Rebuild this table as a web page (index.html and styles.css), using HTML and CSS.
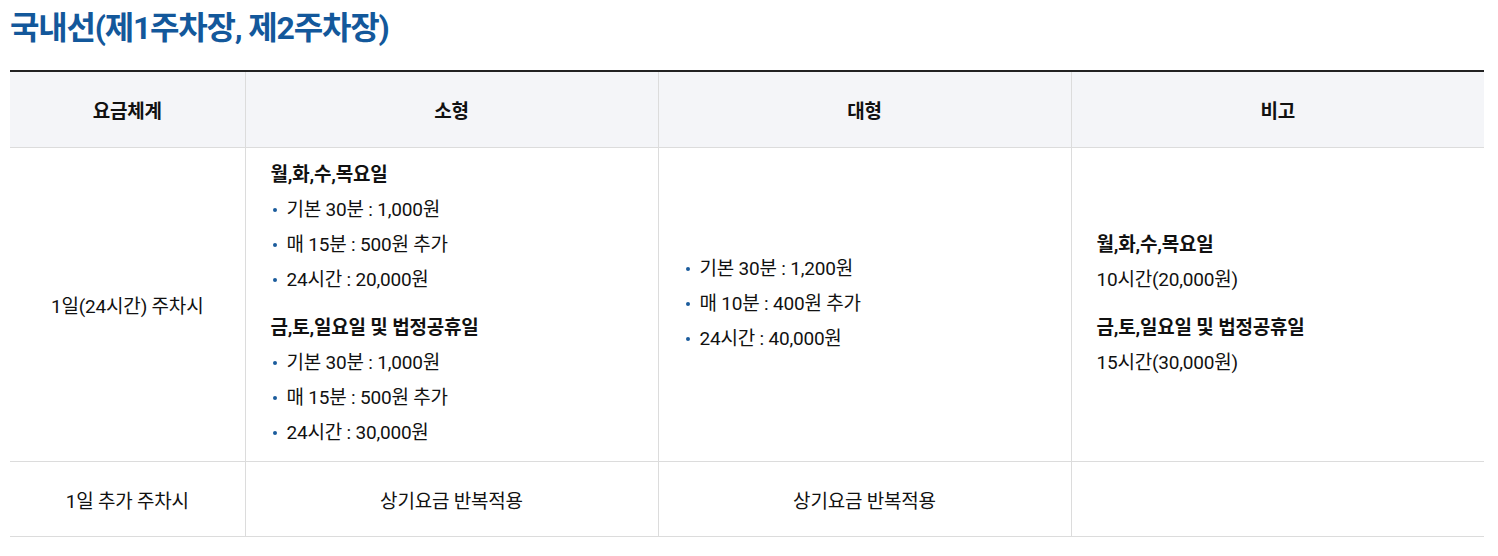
FILE: index.html
```html
<!DOCTYPE html>
<html lang="ko">
<head>
<meta charset="utf-8">
<title>국내선 주차요금</title>
<link rel="stylesheet" href="styles.css">
</head>
<body>
<h2 class="title">국내선(제1주차장, 제2주차장)</h2>
<table class="fee">
  <colgroup>
    <col class="c1"><col class="c2"><col class="c3"><col class="c4">
  </colgroup>
  <thead>
    <tr><th>요금체계</th><th>소형</th><th>대형</th><th>비고</th></tr>
  </thead>
  <tbody>
    <tr class="main">
      <td class="center">1일(24시간) 주차시</td>
      <td class="left">
        <p class="head">월,화,수,목요일</p>
        <ul>
          <li>기본 30분 : 1,000원</li>
          <li>매 15분 : 500원 추가</li>
          <li>24시간 : 20,000원</li>
        </ul>
        <p class="head gap">금,토,일요일 및 법정공휴일</p>
        <ul>
          <li>기본 30분 : 1,000원</li>
          <li>매 15분 : 500원 추가</li>
          <li>24시간 : 30,000원</li>
        </ul>
      </td>
      <td class="left">
        <ul>
          <li>기본 30분 : 1,200원</li>
          <li>매 10분 : 400원 추가</li>
          <li>24시간 : 40,000원</li>
        </ul>
      </td>
      <td class="left">
        <p class="head">월,화,수,목요일</p>
        <p class="line">10시간(20,000원)</p>
        <p class="head gap">금,토,일요일 및 법정공휴일</p>
        <p class="line">15시간(30,000원)</p>
      </td>
    </tr>
    <tr class="extra">
      <td class="center">1일 추가 주차시</td>
      <td class="center">상기요금 반복적용</td>
      <td class="center">상기요금 반복적용</td>
      <td class="center"></td>
    </tr>
  </tbody>
</table>
</body>
</html>
```

FILE: styles.css
```css
html, body {
  margin: 0;
  padding: 0;
  background: #fff;
}
body {
  padding: 0 10px;
  font-family: Roboto, "Noto Sans CJK KR", sans-serif;
  color: #111;
}
.title {
  margin: 0;
  padding-top: 8px;
  height: 62px;
  font-size: 32px;
  line-height: 40px;
  font-weight: 700;
  color: #13589b;
  letter-spacing: -1.2px;
}
.fee {
  width: 1474px;
  table-layout: fixed;
  border-collapse: collapse;
  border-top: 2px solid #222;
  font-size: 19px;
  letter-spacing: -0.2px;
}
.c1 { width: 235px; }
.c2, .c3, .c4 { width: 413px; }
.fee th, .fee td {
  border: 1px solid #dcdcdc;
  border-top: 0;
}
.fee th:first-child, .fee td:first-child { border-left: 0; }
.fee th:last-child, .fee td:last-child { border-right: 0; }
.fee th {
  height: 75px;
  padding: 0;
  background: #f4f5f8;
  font-size: 19px;
  font-weight: 700;
  text-align: center;
}
.fee td {
  padding: 0;
  vertical-align: middle;
}
.extra td { height: 74px; }
.center { text-align: center; }
.fee td.left {
  text-align: left;
  padding: 9px 25px 11px;
}
.head {
  margin: 0;
  font-weight: 700;
  line-height: 35px;
}
.head.gap { margin-top: 13px; }
.line { margin: 0; line-height: 35px; }
ul {
  list-style: none;
  margin: 0;
  padding: 0;
}
li {
  position: relative;
  padding-left: 16px;
  line-height: 35px;
}
li::before {
  content: "";
  position: absolute;
  left: 2px;
  top: 16px;
  width: 4px;
  height: 4px;
  border-radius: 50%;
  background: #1b5c9c;
}
```
